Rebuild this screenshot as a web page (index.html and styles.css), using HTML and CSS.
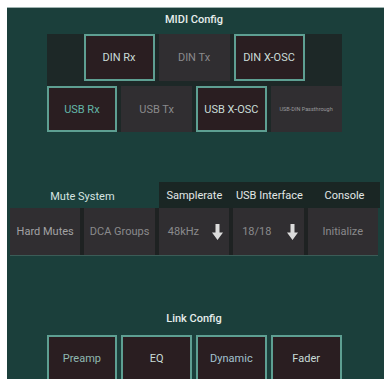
FILE: index.html
```html
<!DOCTYPE html>
<html lang="en">
<head>
    <meta charset="UTF-8">
    <meta name="viewport" content="width=device-width, initial-scale=1.0">
    <title>Setup</title>
    <link rel="stylesheet" href="styles.css">
</head>
<body>
    <div class="panel">
        <div class="section-title">MIDI Config</div>
        <div class="midi-block">
            <div class="midi-row-top">
                <div class="btn on light">DIN Rx</div>
                <div class="btn off">DIN Tx</div>
                <div class="btn on light">DIN X-OSC</div>
            </div>
            <div class="four-row">
                <div class="btn on teal">USB Rx</div>
                <div class="btn off">USB Tx</div>
                <div class="btn on light">USB X-OSC</div>
                <div class="btn off tiny">USB-DIN Passthrough</div>
            </div>
        </div>

        <div class="mid-section">
            <div class="mid-head">
                <div class="mute-title">Mute System</div>
                <div class="head-strip">
                    <div>Samplerate</div>
                    <div>USB Interface</div>
                    <div>Console</div>
                </div>
            </div>
            <div class="mid-buttons">
                <div class="btn off bright">Hard Mutes</div>
                <div class="btn off">DCA Groups</div>
                <div class="btn off select">
                    <span>48kHz</span>
                    <svg width="11" height="16" viewBox="0 0 11 16"><path d="M3.5 0h4v8.5h3.5L5.5 16 0 8.5h3.5z" fill="#dcdcdc"/></svg>
                </div>
                <div class="btn off select">
                    <span>18/18</span>
                    <svg width="11" height="16" viewBox="0 0 11 16"><path d="M3.5 0h4v8.5h3.5L5.5 16 0 8.5h3.5z" fill="#dcdcdc"/></svg>
                </div>
                <div class="btn off">Initialize</div>
            </div>
        </div>

        <div class="section-title link-title">Link Config</div>
        <div class="four-row link-row">
            <div class="btn on teal-soft">Preamp</div>
            <div class="btn on light">EQ</div>
            <div class="btn on blue">Dynamic</div>
            <div class="btn on light">Fader</div>
        </div>
    </div>
</body>
</html>
```

FILE: styles.css
```css
body {
    margin: 0;
    background-color: #ffffff;
    font-family: Roboto, "Liberation Sans", Arial, sans-serif;
    font-size: 11px;
    overflow: hidden;
}
.panel {
    margin: 7px 0 0 7px;
    height: 372px;
    padding: 0 6px 0 3px;
    background-color: #1b3f3b;
    border-top: 1px solid #9fb3b0;
    box-sizing: border-box;
    overflow: hidden;
}
.section-title {
    text-align: center;
    color: #e6eeec;
    font-weight: 500;
    line-height: 14px;
    padding: 5px 0 7px;
}
/* MIDI */
.midi-block {
    width: 295px;
    margin: 0 auto;
    background-color: #1d2827;
    display: flex;
    flex-direction: column;
    gap: 5px;
}
.midi-row-top {
    display: flex;
    justify-content: center;
    gap: 4px;
    height: 47px;
}
.midi-row-top .btn {
    width: 71px;
}
.four-row {
    display: grid;
    grid-template-columns: repeat(4, 1fr);
    gap: 4px;
    height: 46px;
}
.btn {
    display: flex;
    align-items: center;
    justify-content: center;
    box-sizing: border-box;
    white-space: nowrap;
}
.btn.on {
    background-color: #2a1e21;
    border: 2px solid #5e9f92;
}
.btn.off {
    background-color: #302e31;
    color: #8a8a8c;
}
.btn.light { color: #c9dcd8; }
.btn.teal { color: #63b6a9; }
.btn.teal-soft { color: #8fb9b1; }
.btn.blue { color: #a3c2cf; }
.btn.bright { color: #a2a2a4; }
.btn.tiny {
    font-size: 5.5px;
    color: #9a9a9c;
}
/* Mute / samplerate */
.mid-section {
    margin-top: 50px;
}
.mid-head {
    display: grid;
    grid-template-columns: repeat(5, 1fr);
    column-gap: 4px;
    height: 26px;
}
.mute-title {
    grid-column: 1 / 3;
    display: flex;
    align-items: center;
    justify-content: center;
    padding-top: 2px;
    color: #d6e4e1;
}
.head-strip {
    grid-column: 3 / 6;
    display: grid;
    grid-template-columns: repeat(3, 1fr);
    column-gap: 4px;
    margin-right: -2px;
    background-color: #1a2624;
    color: #e2e8e7;
}
.head-strip div {
    display: flex;
    align-items: center;
    justify-content: center;
}
.mid-buttons {
    display: grid;
    grid-template-columns: repeat(5, 1fr);
    gap: 4px;
    height: 47px;
    background-color: #1e2222;
    border-bottom: 1px solid #3b5c57;
}
.btn.select {
    justify-content: space-between;
    padding: 0 6px 0 9px;
}
/* Link */
.link-title {
    margin-top: 51px;
    padding-bottom: 9px;
}
.link-row {
    width: 295px;
    margin: 0 auto;
}
```
